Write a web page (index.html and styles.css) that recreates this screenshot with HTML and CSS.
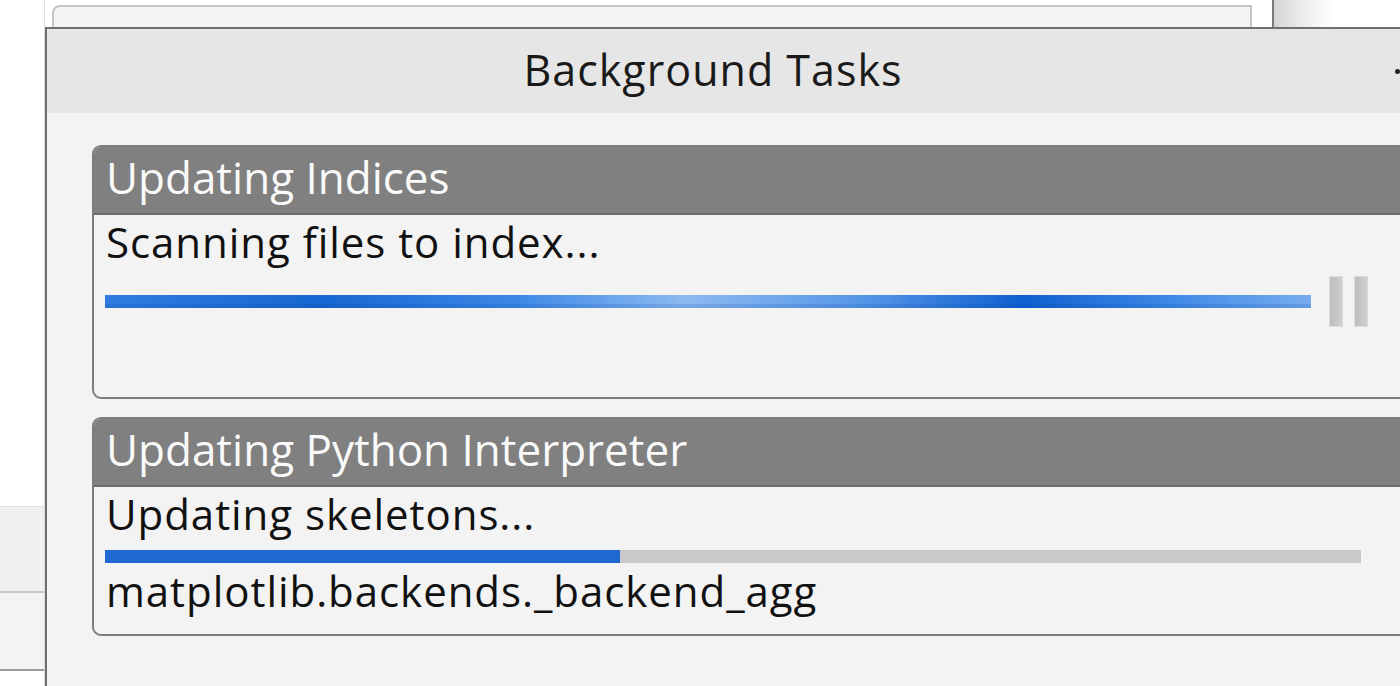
FILE: index.html
```html
<!DOCTYPE html>
<html lang="en">

<head>
    <meta charset="UTF-8">
    <title>Background Tasks</title>
    <link rel="stylesheet" href="styles.css">
</head>

<body>
    <div class="desktop">
        <div class="janela-fundo"></div>
        <div class="divisor"></div>
        <div class="lateral">
            <div class="lateral-topo"></div>
            <div class="lateral-bloco"></div>
            <div class="lateral-bloco ultimo"></div>
        </div>

        <div class="dialogo">
            <div class="titulo">
                <span>Background Tasks</span>
                <i class="fechar"></i>
            </div>
            <div class="conteudo">
                <div class="tarefa">
                    <div class="tarefa-cabecalho">Updating Indices</div>
                    <div class="tarefa-corpo alto">
                        <div class="texto">Scanning files to index...</div>
                        <div class="linha-progresso">
                            <div class="barra indeterminada"></div>
                            <div class="pausa"><span></span><span></span></div>
                        </div>
                    </div>
                </div>

                <div class="tarefa">
                    <div class="tarefa-cabecalho">Updating Python Interpreter</div>
                    <div class="tarefa-corpo">
                        <div class="texto">Updating skeletons...</div>
                        <div class="linha-progresso">
                            <div class="barra trilho">
                                <div class="preenchido" style="width: 41%"></div>
                            </div>
                        </div>
                        <div class="texto">matplotlib.backends._backend_agg</div>
                    </div>
                </div>
            </div>
        </div>
    </div>
</body>

</html>
```

FILE: styles.css
```css
body {
    margin: 0;
    background-color: #ffffff;
    font-family: "Open Sans", "Noto Sans", sans-serif;
    overflow: hidden;
}

.desktop {
    position: relative;
    width: 1400px;
    height: 686px;
    overflow: hidden;
}

/* janelas atras do dialogo */
.janela-fundo {
    position: absolute;
    left: 52px;
    top: 5px;
    width: 1196px;
    height: 40px;
    background-color: #f4f4f4;
    border: 2px solid #c4c4c4;
    border-radius: 8px 0 0 0;
}

.divisor {
    position: absolute;
    left: 1272px;
    top: 0;
    width: 60px;
    height: 30px;
    border-left: 2px solid #7a7a7a;
    background: linear-gradient(to right, #d4d4d4, #f2f2f2 60%, #ffffff);
}

.lateral {
    position: absolute;
    left: 0;
    top: 0;
    width: 44px;
    height: 686px;
    border-right: 1px solid #dcdcdc;
    display: flex;
    flex-direction: column;
}

.lateral-topo {
    height: 506px;
    background-color: #ffffff;
}

.lateral-bloco {
    height: 84px;
    background-color: #f0f0f0;
    border-top: 1px solid #e2e2e2;
    border-bottom: 2px solid #c8c8c8;
}

.lateral-bloco.ultimo {
    height: 76px;
    background-color: #f3f3f3;
    border-top: none;
    border-bottom: 2px solid #9a9a9a;
}

/* dialogo */
.dialogo {
    position: absolute;
    left: 45px;
    top: 27px;
    width: 1440px;
    height: 700px;
    background-color: #f3f3f3;
    border-top: 2px solid #6f6f6f;
    border-left: 2px solid #6f6f6f;
}

.titulo {
    position: relative;
    height: 84px;
    background-color: #e6e6e6;
    display: flex;
    align-items: center;
    justify-content: center;
    padding-right: 108px;
    font-size: 43px;
    letter-spacing: 1px;
    color: #1a1a1a;
}

.titulo span {
    margin-top: -4px;
}

.fechar {
    position: absolute;
    left: 1348px;
    top: 40px;
    width: 5px;
    height: 5px;
    border-radius: 50%;
    background-color: #222222;
}

.conteudo {
    padding: 32px 0 0 45px;
    display: flex;
    flex-direction: column;
    gap: 18px;
}

.tarefa {
    width: 1400px;
    border: 2px solid #7c7c7c;
    border-radius: 9px;
    overflow: hidden;
    background-color: #f3f3f3;
}

.tarefa-cabecalho {
    height: 60px;
    padding: 0 0 6px 12px;
    background-color: #808080;
    border-bottom: 2px solid #6c6c6c;
    color: #fafafa;
    font-size: 44px;
    letter-spacing: 0;
    line-height: 60px;
}

.tarefa-corpo {
    padding: 4px 0 20px 11px;
}

.tarefa-corpo.alto {
    height: 178px;
    padding-bottom: 0;
}

.texto {
    font-size: 42px;
    letter-spacing: 0.95px;
    line-height: 46px;
    color: #111111;
    padding-left: 1px;
}

.linha-progresso {
    display: flex;
    align-items: center;
    margin: 13px 0 5px;
}

.tarefa-corpo.alto .linha-progresso {
    margin-top: 11px;
}

.barra {
    height: 13px;
}

.indeterminada {
    width: 1206px;
    background: linear-gradient(to right, #2f7ddf 0%, #1767d2 18%, #3c88e6 34%, #8dbaf1 48%, #5a99e8 62%, #0f60cf 76%, #3d88e6 88%, #76acee 100%);
    box-shadow: inset 0 -4px 0 rgba(0, 60, 160, 0.15);
}

.pausa {
    display: flex;
    gap: 11px;
    margin-left: 18px;
}

.pausa span {
    width: 12px;
    height: 49px;
    background: linear-gradient(to right, #bdbdbd, #cfcfcf);
    border: 1px solid #dadada;
}

.trilho {
    width: 1256px;
    background-color: #c9c9c9;
}

.preenchido {
    height: 100%;
    background-color: #1f68d2;
}
```
